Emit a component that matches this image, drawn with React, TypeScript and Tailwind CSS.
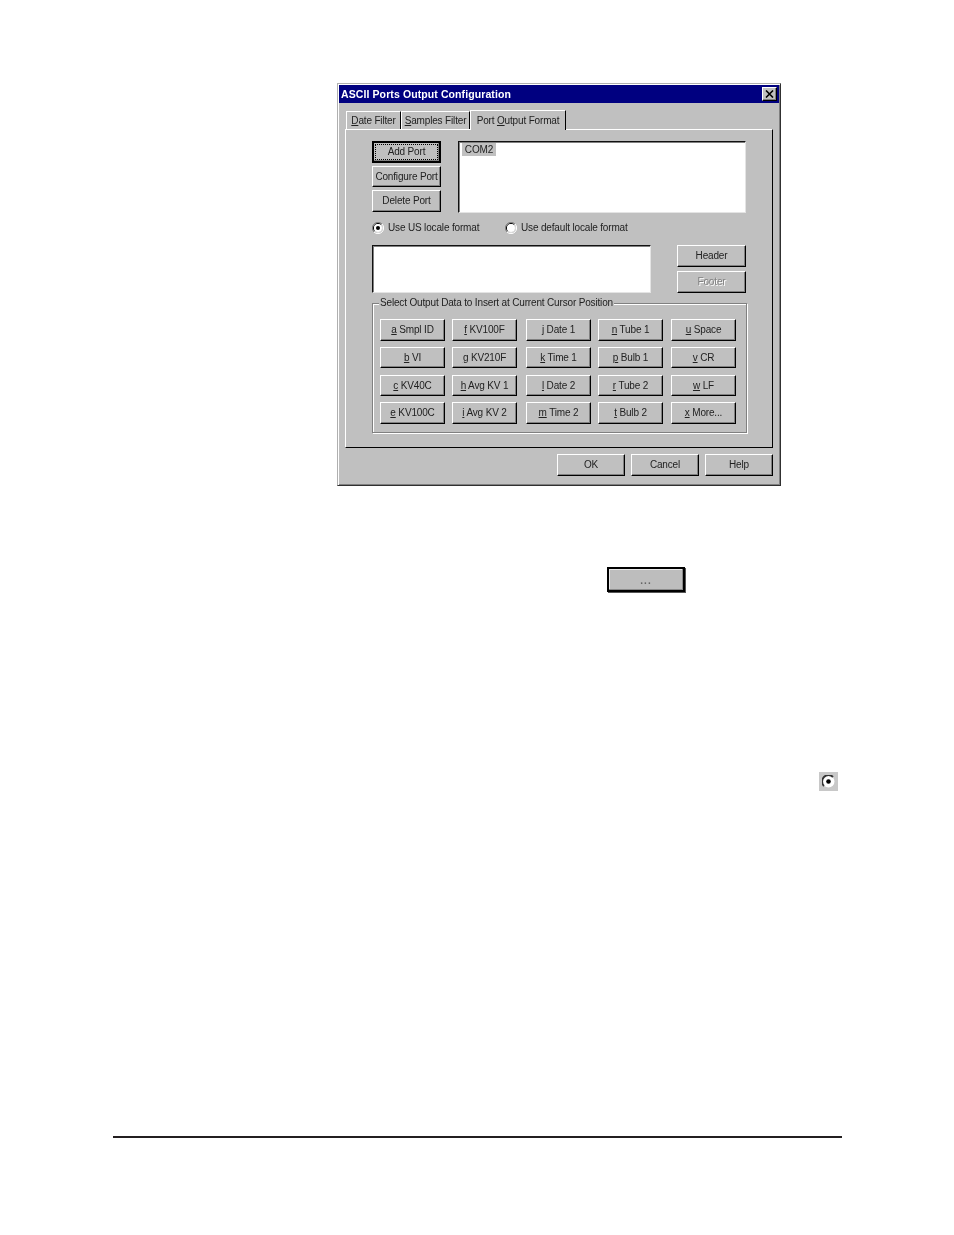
import React from "react";

const bevel =
  "flex items-center justify-center bg-[#c0c0c0] border border-t-white border-l-white border-r-black border-b-black shadow-[inset_-1px_-1px_0_#808080] text-[#222] whitespace-pre";

function Btn({ className = "", children }: { className?: string; children: React.ReactNode }) {
  return <div className={`${bevel} ${className}`}>{children}</div>;
}

function Radio({ on }: { on?: boolean }) {
  return (
    <svg width="12" height="12" viewBox="0 0 12 12" className="shrink-0">
      <path d="M10 2A5.6 5.6 0 0 0 2 10" fill="none" stroke="#808080" strokeWidth="1" />
      <path d="M9.2 2.8A4.5 4.5 0 0 0 2.8 9.2" fill="none" stroke="#000" strokeWidth="1" />
      <circle cx="6" cy="6" r="4" fill="#fff" />
      <path d="M2 10A5.6 5.6 0 0 0 10 2" fill="none" stroke="#fff" strokeWidth="1" />
      <path d="M2.8 9.2A4.5 4.5 0 0 0 9.2 2.8" fill="none" stroke="#dfdfdf" strokeWidth="1" />
      {on && <circle cx="6" cy="6" r="2" fill="#000" />}
    </svg>
  );
}

const cols: [string, string][][] = [
  [["a", " Smpl ID"], ["b", " VI"], ["c", " KV40C"], ["e", " KV100C"]],
  [["f", " KV100F"], ["g", " KV210F"], ["h", " Avg KV 1"], ["i", " Avg KV 2"]],
  [["j", " Date 1"], ["k", " Time 1"], ["l", " Date 2"], ["m", " Time 2"]],
  [["n", " Tube 1"], ["p", " Bulb 1"], ["r", " Tube 2"], ["t", " Bulb 2"]],
  [["u", " Space"], ["v", " CR"], ["w", " LF"], ["x", " More..."]],
];

const rowHeights = ["h-[22px] mb-[6px]", "h-[21px] mb-[7px]", "h-[21px] mb-[6px]", "h-[22px]"];
const colWidths = ["mr-[7px]", "mr-[9px]", "mr-[7px]", "mr-[8px]", ""];

const tab = "flex items-center justify-center bg-[#c0c0c0] border-t border-l border-t-white border-l-white border-r border-r-black text-[#222]";
const sunken = "bg-white border-t border-l border-t-[#111] border-l-[#111] border-r border-b border-r-[#e4e4e4] border-b-[#e4e4e4] shadow-[inset_1px_1px_0_#808080]";

export default function App() {
  return (
    <div className="w-[954px] h-[1235px] bg-white overflow-hidden pt-[83px] font-['Liberation_Sans',Arial,sans-serif] text-[10px] leading-none tracking-[-0.16px]">
      <div className="ml-[337px] w-[444px] h-[403px] bg-[#c0c0c0] border border-t-[#b0b0b0] border-l-[#b0b0b0] border-r-[#303030] border-b-[#303030] shadow-[inset_1px_1px_0_#fff,inset_-1px_-1px_0_#808080] p-[1px] flex flex-col blur-[0.3px]">
        <div className="h-[18px] shrink-0 bg-[#000080] flex items-center justify-between pl-[2px] pr-[2px]">
          <span className="text-white font-bold text-[10.5px] tracking-[0.1px]">ASCII Ports Output Configuration</span>
          <div className={`${bevel} w-[15px] h-[14px]`}>
            <svg width="9" height="8" viewBox="0 0 9 8">
              <path d="M1 0.5L8 7.5M8 0.5L1 7.5" stroke="#000" strokeWidth="1.6" />
            </svg>
          </div>
        </div>

        <div className="h-[26px] shrink-0 flex items-end pl-[7px]">
          <div className={`${tab} w-[55px] h-[18px]`}>
            <span><u>D</u>ate Filter</span>
          </div>
          <div className={`${tab} w-[69px] h-[18px]`}>
            <span><u>S</u>amples Filter</span>
          </div>
          <div className={`${tab} w-[96px] h-[20px] -mb-[1px] z-10`}>
            <span>Port <u>O</u>utput Format</span>
          </div>
        </div>

        <div className="ml-[6px] w-[428px] h-[319px] shrink-0 border border-t-white border-l-white border-r-black border-b-black pl-[26px] pt-[11px] flex flex-col">
          <div className="flex h-[72px]">
            <div className="w-[69px] flex flex-col">
              <Btn className="h-[22px] !border-2 !border-black p-[1px] mb-[3px]">
                <div className="w-full h-full border border-dotted border-black flex items-center justify-center pb-[1px]">Add Port</div>
              </Btn>
              <Btn className="h-[21px] mb-[3px]">Configure Port</Btn>
              <Btn className="h-[22px] pb-[1px]">Delete Port</Btn>
            </div>
            <div className={`ml-[17px] w-[288px] h-[72px] pl-[3px] pt-[1px] ${sunken}`}>
              <div className="w-[34px] h-[13px] bg-[#c0c0c0] flex items-center justify-center text-[#222]">COM2</div>
            </div>
          </div>

          <div className="flex items-center h-[12px] mt-[9px] text-[#222]">
            <Radio on />
            <span className="ml-[4px] w-[117px]">Use US locale format</span>
            <Radio />
            <span className="ml-[4px]">Use default locale format</span>
          </div>

          <div className="flex mt-[11px] h-[48px]">
            <div className={`w-[279px] h-[48px] ${sunken}`} />
            <div className="ml-[26px] w-[69px] flex flex-col">
              <Btn className="h-[22px] mb-[4px] pb-[1px]">Header</Btn>
              <Btn className="h-[22px] pb-[1px] text-[#808080] [text-shadow:1px_1px_0_#fff]">Footer</Btn>
            </div>
          </div>

          <div className="relative mt-[10px] w-[375px] h-[130px] border border-[#808080] shadow-[inset_1px_1px_0_#fff,1px_1px_0_#fff] pl-[7px] pt-[15px] flex">
            <span className="absolute left-[6px] -top-[6px] px-[1px] bg-[#c0c0c0] text-[#222]">
              Select Output Data to Insert at Current Cursor Position
            </span>
            {cols.map((col, i) => (
              <div key={i} className={`w-[65px] flex flex-col ${colWidths[i]}`}>
                {col.map(([k, t], j) => (
                  <Btn key={k} className={rowHeights[j]}>
                    <u>{k}</u>{t}
                  </Btn>
                ))}
              </div>
            ))}
          </div>
        </div>

        <div className="flex justify-end gap-[6px] mt-[6px] pr-[6px]">
          <Btn className="w-[68px] h-[22px] pb-[1px]">OK</Btn>
          <Btn className="w-[68px] h-[22px] pb-[1px]">Cancel</Btn>
          <Btn className="w-[68px] h-[22px] pb-[1px]">Help</Btn>
        </div>
      </div>

      <div className="ml-[607px] mt-[81px] w-[78px] h-[25px] bg-[#bdbdbd] border-2 border-black shadow-[1px_1px_0_#555,inset_-1px_-1px_0_#8a8a8a,inset_1px_1px_0_#e8e8e8] flex items-end justify-center pb-[4px] text-[#666] text-[10px] font-bold tracking-[1px] blur-[0.3px]">
        ...
      </div>

      <div className="ml-[819px] mt-[180px] w-[19px] h-[19px] bg-[#c8c8c8] flex items-center justify-center">
        <svg width="13" height="13" viewBox="0 0 13 13" className="blur-[0.4px]">
          <circle cx="6.5" cy="6.5" r="6" fill="#fff" />
          <path d="M11 2A6 6 0 0 0 2 11" fill="none" stroke="#333" strokeWidth="1.8" />
          <circle cx="6.5" cy="6.5" r="2.3" fill="#000" />
        </svg>
      </div>

      <div className="ml-[113px] mt-[345px] w-[729px] h-[2px] bg-[#231f20]" />
    </div>
  );
}
